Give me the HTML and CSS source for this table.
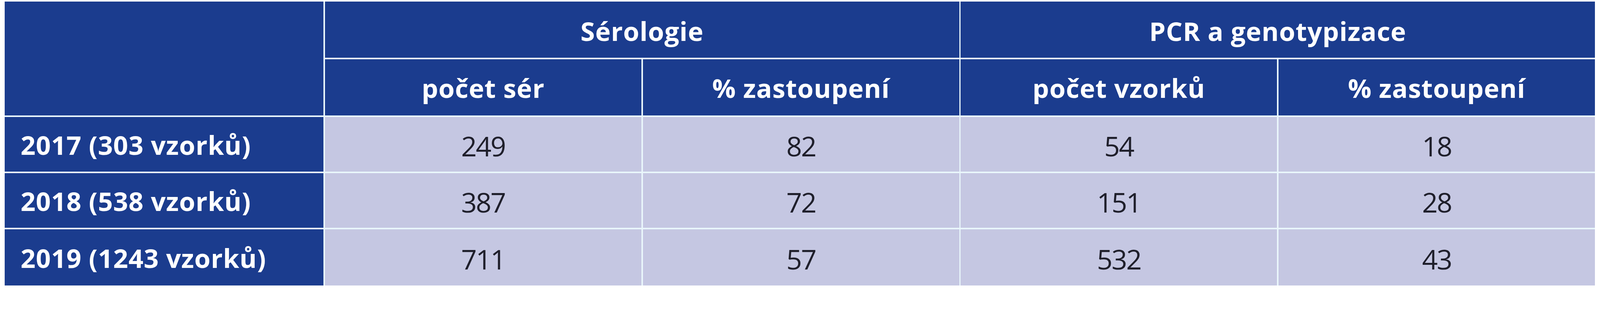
FILE: index.html
```html
<!DOCTYPE html>
<html lang="cs">
<head>
<meta charset="utf-8">
<title>Tabulka</title>
<link rel="stylesheet" href="styles.css">
</head>
<body>
<div class="table">
  <div class="cell head corner"></div>
  <div class="cell head group">Sérologie</div>
  <div class="cell head group">PCR a genotypizace</div>
  <div class="cell head sub">počet sér</div>
  <div class="cell head sub">% zastoupení</div>
  <div class="cell head sub">počet vzorků</div>
  <div class="cell head sub">% zastoupení</div>

  <div class="cell head rowhead">2017 (303 vzorků)</div>
  <div class="cell data">249</div>
  <div class="cell data">82</div>
  <div class="cell data">54</div>
  <div class="cell data">18</div>

  <div class="cell head rowhead">2018 (538 vzorků)</div>
  <div class="cell data">387</div>
  <div class="cell data">72</div>
  <div class="cell data">151</div>
  <div class="cell data">28</div>

  <div class="cell head rowhead">2019 (1243 vzorků)</div>
  <div class="cell data">711</div>
  <div class="cell data">57</div>
  <div class="cell data">532</div>
  <div class="cell data">43</div>
</div>
</body>
</html>
```

FILE: styles.css
```css
:root {
  /* one pixel of the 4422px-wide design, scaled to the viewport */
  --u: calc(100vw / 4422);
}

html, body {
  margin: 0;
  padding: 0;
  background: #ffffff;
  overflow: hidden;
}

body {
  padding: calc(4 * var(--u)) 0 0 calc(13 * var(--u));
}

.table {
  display: grid;
  width: calc(4395 * var(--u));
  grid-template-columns: calc(881 * var(--u)) repeat(4, 1fr);
  grid-template-rows:
    calc(156 * var(--u))
    calc(156 * var(--u))
    calc(151 * var(--u))
    calc(152 * var(--u))
    calc(155 * var(--u));
  gap: calc(4 * var(--u));
  background: #e9f6fb;
  font-family: "Open Sans", "Liberation Sans", sans-serif;
}

.cell {
  display: flex;
  align-items: center;
  justify-content: center;
  box-sizing: border-box;
  min-width: 0;
  white-space: nowrap;
}

.head {
  background: #1b3c8e;
  color: #ffffff;
  font-weight: 700;
  font-size: calc(72 * var(--u));
  letter-spacing: calc(1 * var(--u));
}

.corner {
  grid-row: 1 / span 2;
}

.group {
  grid-column: span 2;
  padding-top: calc(8 * var(--u));
}

.sub {
  padding-top: calc(4 * var(--u));
}

.rowhead {
  justify-content: flex-start;
  padding-left: calc(44 * var(--u));
  padding-top: calc(4 * var(--u));
}

.data {
  background: #c5c7e2;
  color: #1f1f2b;
  font-weight: 400;
  font-size: calc(76 * var(--u));
  letter-spacing: calc(-3 * var(--u));
  padding-top: calc(8 * var(--u));
}
```
